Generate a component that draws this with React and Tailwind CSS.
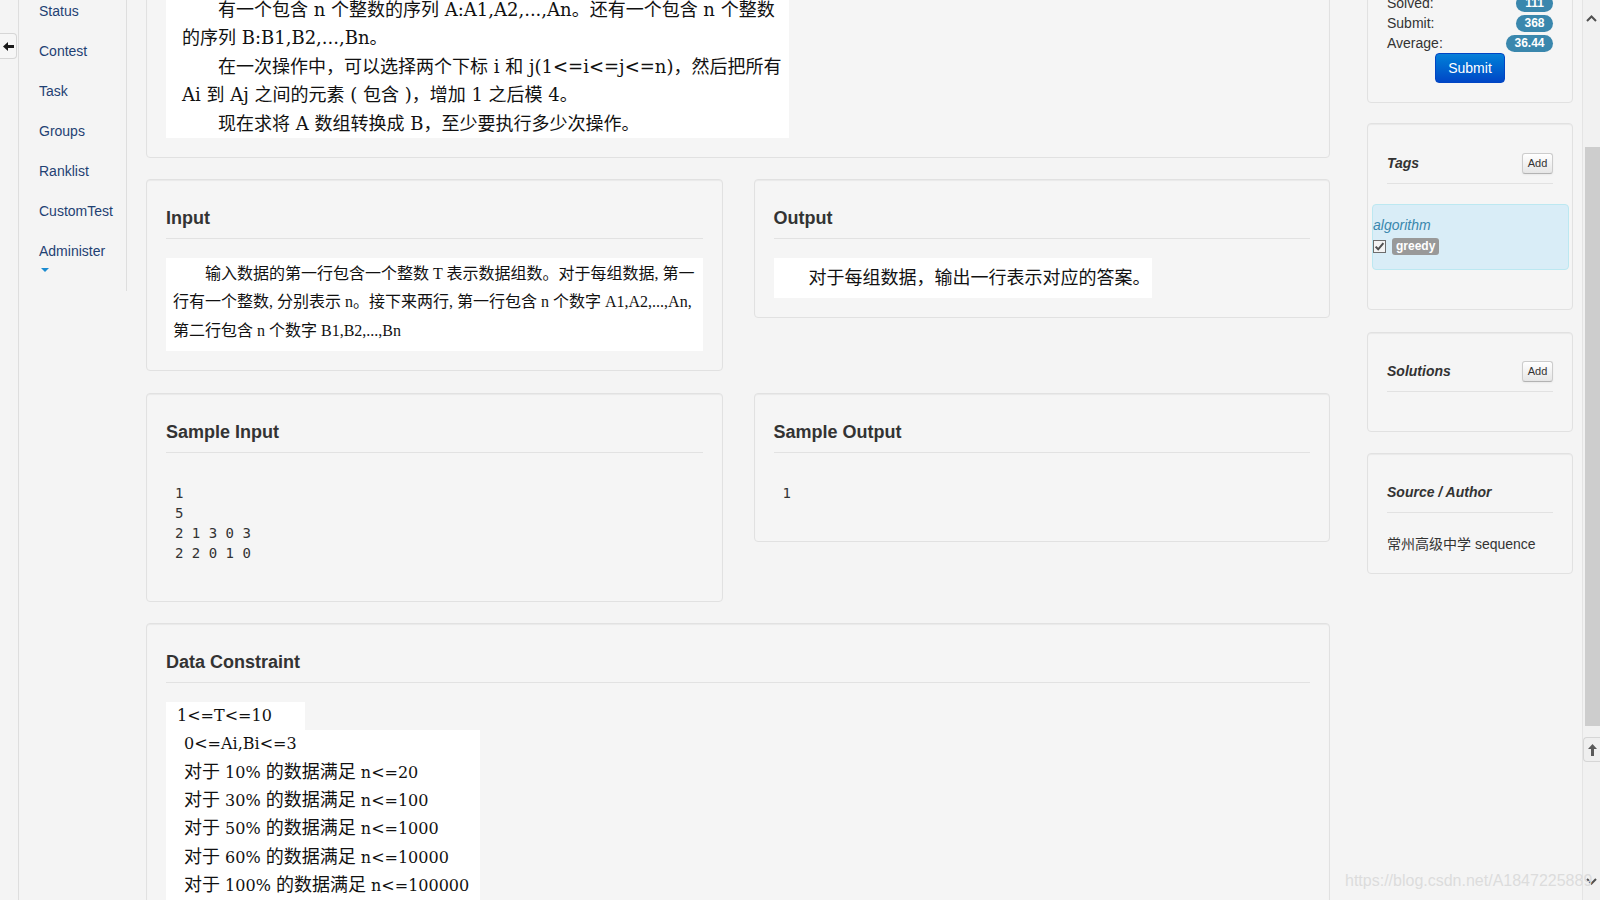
import React from "react";

const MONO = "font-['DejaVu_Sans_Mono',monospace]";

function Panel({ className = "", children }) {
  return (
    <div
      className={`rounded-[4px] border border-[#e1e1e1] bg-[#f5f5f5] px-[19px] pt-[19px] pb-[19px] shadow-[inset_0_1px_1px_rgba(0,0,0,0.05)] ${className}`}
    >
      {children}
    </div>
  );
}

function Title({ children }) {
  return (
    <>
      <h3 className="mt-[9px] mb-[10px] text-[18px] font-bold leading-5 text-[#333]">{children}</h3>
      <div className="border-t border-[#e2e2e2]" />
    </>
  );
}

function SideTitle({ children, add, lower }) {
  return (
    <>
      <div className={`${lower ? "mt-[10px] mb-[10px]" : "mt-[9px] mb-[10px]"} flex h-5 items-center justify-between`}>
        <span className="text-[14px] font-bold italic text-[#333]">{children}</span>
        {add && (
          <button className="flex h-[21px] w-[31px] items-center justify-center rounded-[3px] border border-[#cccccc] border-b-[#b3b3b3] bg-gradient-to-b from-white to-[#e6e6e6] text-[11px] text-[#333] shadow-[0_1px_2px_rgba(0,0,0,0.05)]">
            Add
          </button>
        )}
      </div>
      <div className="border-t border-[#e2e2e2]" />
    </>
  );
}

function Badge({ children, w }) {
  return (
    <span
      className={`${w} inline-block h-[17px] rounded-full bg-[#3a87ad] text-center text-[12px] font-bold leading-[17px] text-white`}
    >
      {children}
    </span>
  );
}

function C({ children }) {
  return <span className="font-['Noto_Sans_CJK_SC',sans-serif] text-[18px] leading-none">{children}</span>;
}

const navItems = ["Status", "Contest", "Task", "Groups", "Ranklist", "CustomTest"];

export default function App() {
  return (
    <div className="relative h-[900px] w-[1600px] overflow-hidden bg-[#f4f4f4] font-['Liberation_Sans','Noto_Sans_CJK_SC',sans-serif] text-[14px] text-[#333]">
      <div className="flex h-full">
        {/* left strip with back button */}
        <div className="w-[18px] shrink-0 pt-[33px]">
          <div className="flex h-[26px] w-[17px] items-center justify-center rounded-r-[4px] border border-l-0 border-[#d6d6d6] bg-[#f6f6f6]">
            <svg width="11" height="9" viewBox="0 0 11 9">
              <path d="M0 4.5 L5 0 V3 H11 V6 H5 V9 Z" fill="#1a1a1a" />
            </svg>
          </div>
        </div>

        <div className="flex h-full flex-1 border-l border-[#dedede]">
          {/* sidebar */}
          <nav className="w-[108px] shrink-0 self-start border-r border-[#dedede] pl-[20px] pb-[19px]">
            <ul className="-mt-[9px]">
              {navItems.map((n) => (
                <li key={n} className="py-[10px] leading-5 text-[#1f4173]">
                  {n}
                </li>
              ))}
              <li className="pt-[10px] leading-5 text-[#1f4173]">
                <div>Administer</div>
                <div className="mt-[7px] ml-[2px] h-0 w-0 border-x-[4px] border-t-[4px] border-x-transparent border-t-[#1b8bd0]" />
              </li>
            </ul>
          </nav>

          {/* main column */}
          <main className="ml-[19px] flex w-[1184px] shrink-0 flex-col">
            <Panel className="-mt-[24px]">
              <div className="w-[623px] whitespace-nowrap bg-white pl-[16px] font-['DejaVu_Serif','Noto_Sans_CJK_SC',serif] text-[18px] leading-[28.4px] text-[#111]">
                <div className="indent-[36px]">有一个包含 n 个整数的序列 A:A1,A2,...,An。还有一个包含 n 个整数</div>
                <div>的序列 B:B1,B2,...,Bn。</div>
                <div className="indent-[36px]">在一次操作中，可以选择两个下标 i 和 j(1&lt;=i&lt;=j&lt;=n)，然后把所有</div>
                <div>Ai 到 Aj 之间的元素 ( 包含 )，增加 1 之后模 4。</div>
                <div className="indent-[36px]">现在求将 A 数组转换成 B，至少要执行多少次操作。</div>
              </div>
            </Panel>

            <div className="mt-[21px] grid grid-cols-2 items-start gap-[31px]">
              <Panel>
                <Title>Input</Title>
                <div className="mt-[19px] whitespace-nowrap bg-white pt-[2px] pb-[6px] pl-[7px] font-['Liberation_Serif','Noto_Sans_CJK_SC',serif] text-[16px] leading-[28.4px] text-[#111]">
                  <div className="indent-[32px]">输入数据的第一行包含一个整数 T 表示数据组数。对于每组数据, 第一</div>
                  <div>行有一个整数, 分别表示 n。接下来两行, 第一行包含 n 个数字 A1,A2,...,An,</div>
                  <div>第二行包含 n 个数字 B1,B2,...,Bn</div>
                </div>
              </Panel>
              <Panel>
                <Title>Output</Title>
                <div className="mt-[19px] w-[378px] whitespace-nowrap bg-white py-[6px] pl-[35px] font-['Liberation_Serif','Noto_Sans_CJK_SC',serif] text-[18px] leading-[28.4px] text-[#111]">
                  对于每组数据，输出一行表示对应的答案。
                </div>
              </Panel>
            </div>

            <div className="mt-[22px] grid grid-cols-2 items-start gap-[31px]">
              <Panel>
                <Title>Sample Input</Title>
                <pre className={`${MONO} mt-[19px] mb-[9px] pt-[11px] pb-[10px] pl-[9px] text-[14px] leading-5 text-[#333]`}>
{`1
5
2 1 3 0 3
2 2 0 1 0`}
                </pre>
              </Panel>
              <Panel>
                <Title>Sample Output</Title>
                <pre className={`${MONO} mt-[19px] mb-[9px] pt-[11px] pb-[10px] pl-[9px] text-[14px] leading-5 text-[#333]`}>
{`1`}
                </pre>
              </Panel>
            </div>

            <Panel className="mt-[21px]">
              <Title>Data Constraint</Title>
              <div className="mt-[19px] whitespace-nowrap font-['DejaVu_Serif',serif] text-[16px] leading-[28.4px] text-[#111]">
                <div className="h-[28px] w-[139px] bg-white pl-[11px] leading-[28px]">1&lt;=T&lt;=10</div>
                <div className="w-[314px] bg-white pl-[18px]">
                  <div className="h-[28.4px]">0&lt;=Ai,Bi&lt;=3</div>
                  <div className="h-[28.4px]"><C>对于</C> 10% <C>的数据满足</C> n&lt;=20</div>
                  <div className="h-[28.4px]"><C>对于</C> 30% <C>的数据满足</C> n&lt;=100</div>
                  <div className="h-[28.4px]"><C>对于</C> 50% <C>的数据满足</C> n&lt;=1000</div>
                  <div className="h-[28.4px]"><C>对于</C> 60% <C>的数据满足</C> n&lt;=10000</div>
                  <div className="h-[28.4px]"><C>对于</C> 100% <C>的数据满足</C> n&lt;=100000</div>
                </div>
              </div>
            </Panel>
          </main>

          {/* right column */}
          <aside className="ml-[37px] flex w-[206px] shrink-0 flex-col">
            <Panel className="-mt-[27px]">
              <div className="flex h-5 items-center justify-between">
                <span>Solved:</span>
                <Badge w="w-[37px]">111</Badge>
              </div>
              <div className="flex h-5 items-center justify-between">
                <span>Submit:</span>
                <Badge w="w-[37px]">368</Badge>
              </div>
              <div className="flex h-5 items-center justify-between">
                <span>Average:</span>
                <Badge w="w-[47px]">36.44</Badge>
              </div>
              <div className="flex justify-center">
                <button className="h-[30px] w-[70px] rounded-[4px] border border-[#0045c4] bg-gradient-to-b from-[#0a80d8] to-[#0046c6] text-[14px] text-white">
                  Submit
                </button>
              </div>
            </Panel>

            <Panel className="mt-[20px]">
              <SideTitle add lower>Tags</SideTitle>
              <div className="mt-[20px] mb-[20px] -ml-[15px] -mr-[16px] rounded-[4px] border border-[#bce8f1] bg-[#d9edf7] pt-[10px] pb-[14px]">
                <div className="leading-5 italic text-[#3a87ad]">algorithm</div>
                <div className="mt-[2px] flex h-[18px] items-center">
                  <svg width="13" height="13" viewBox="0 0 13 13" className="shrink-0">
                    <rect x="0.5" y="0.5" width="12" height="12" fill="#f4f4f4" stroke="#6d6d6d" />
                    <path d="M2.6 6.6 L5.2 9.3 L10.4 3.2" fill="none" stroke="#505050" strokeWidth="2" />
                  </svg>
                  <span className="ml-[6px] inline-block h-[17px] rounded-[3px] bg-[#999999] px-[4px] text-[12px] font-bold leading-[17px] text-white">
                    greedy
                  </span>
                </div>
              </div>
            </Panel>

            <Panel className="mt-[22px]">
              <SideTitle add>Solutions</SideTitle>
              <div className="h-[20px]" />
            </Panel>

            <Panel className="mt-[21px] pb-[18px]">
              <SideTitle>Source / Author</SideTitle>
              <div className="mt-[21px] leading-5">常州高级中学 sequence</div>
            </Panel>
          </aside>

          {/* scrollbar */}
          <div className="ml-auto flex w-[18px] shrink-0 flex-col border-l border-[#e4e4e4] bg-[#f1f1f1]">
            <div className="flex h-[147px] justify-center pt-[15px]">
              <svg width="11" height="7" viewBox="0 0 11 7">
                <path d="M1 6 L5.5 1.5 L10 6" fill="none" stroke="#505050" strokeWidth="2" />
              </svg>
            </div>
            <div className="ml-[2px] h-[579px] bg-[#cdcdcd]" />
            <div className="flex flex-1 items-end justify-center pb-[15px]">
              <svg width="11" height="7" viewBox="0 0 11 7">
                <path d="M1 1 L5.5 5.5 L10 1" fill="none" stroke="#505050" strokeWidth="2" />
              </svg>
            </div>
          </div>
        </div>
      </div>

      {/* back to top button */}
      <div className="absolute left-[1583px] top-[737px] flex h-[25px] w-[17px] items-center justify-center rounded-l-[4px] border border-r-0 border-[#d6d6d6] bg-[#efefef]">
        <svg width="9" height="12" viewBox="0 0 9 12">
          <path d="M4.5 0 L9 5 H6 V12 H3 V5 H0 Z" fill="#5a5a5a" />
        </svg>
      </div>

      {/* watermark */}
      <div className="pointer-events-none absolute left-[1345px] top-[871px] whitespace-nowrap text-[16px] leading-5 text-[#dcdcdc]">
        https://blog.csdn.net/A1847225889
      </div>
    </div>
  );
}
